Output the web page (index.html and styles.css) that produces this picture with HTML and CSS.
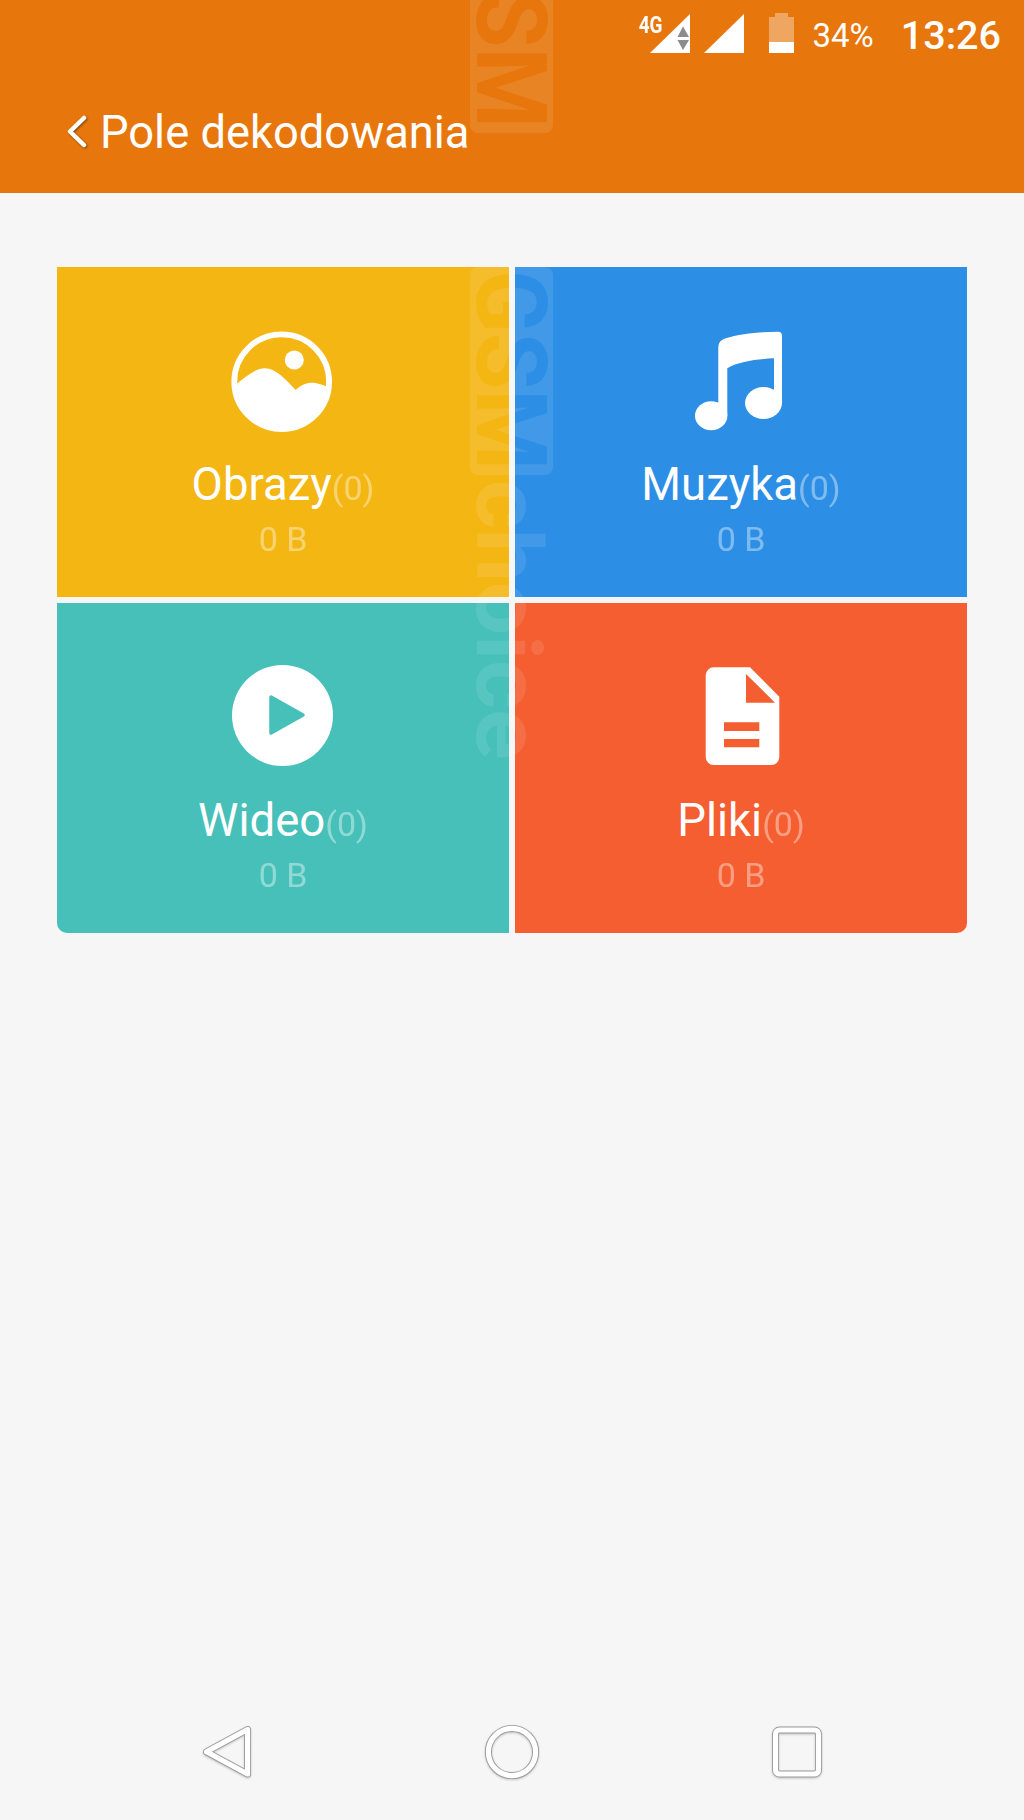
FILE: index.html
```html
<!DOCTYPE html>
<html lang="pl">
<head>
  <meta charset="UTF-8" />
  <meta name="viewport" content="width=device-width, initial-scale=1.0" />
  <title>Pole dekodowania</title>
  <link rel="stylesheet" href="styles.css">
</head>
<body>
  <div class="page">
    <header class="header">
      <div class="status">
        <div class="signal">
          <span class="net">4G</span>
          <svg width="40" height="39" viewBox="0 0 40 39">
            <path d="M0 39 L40 0 V39 Z" fill="#fff"/>
            <path d="M33 12.5 L39 23 H27.5 Z M27.5 26 H39 L33 36 Z" fill="#8c8c8c"/>
          </svg>
        </div>
        <svg class="sim2" width="40" height="39" viewBox="0 0 40 39">
          <path d="M0 39 L40 0 V39 Z" fill="#fff"/>
        </svg>
        <svg class="battery" width="25" height="40" viewBox="0 0 25 40">
          <path d="M6 0 H19 V4 H25 V29 H0 V4 H6 Z" fill="#fff" fill-opacity="0.35"/>
          <rect x="0" y="29" width="25" height="11" fill="#fff"/>
        </svg>
        <span class="percent">34%</span>
        <span class="clock">13:26</span>
      </div>
      <div class="title-row">
        <svg class="chevron" width="24" height="36" viewBox="0 0 24 36">
          <path d="M20 3 L6 16.5 L20 30" fill="none" stroke="#fff" stroke-width="4.5" stroke-linecap="round" stroke-linejoin="round"/>
        </svg>
        <h1 class="title">Pole dekodowania</h1>
      </div>
    </header>

    <main class="main">
      <div class="grid">
        <div class="cell yellow">
          <svg class="icon" width="104" height="104" viewBox="0 0 104 104">
            <circle cx="50.7" cy="51.7" r="47.4" fill="none" stroke="#fff" stroke-width="5.8"/>
            <circle cx="63.3" cy="30" r="9.5" fill="#fff"/>
            <path d="M4 55.5 C15 46 25 38.3 34 38.3 C45 38.3 55 50 64.7 60 C70 55 75 52.7 81 52.7 C86 52.7 90 54.5 97.5 57 A47 47 0 0 1 4 55.5 Z" fill="#fff"/>
          </svg>
          <div class="name">Obrazy<span class="count">(0)</span></div>
          <div class="size">0 B</div>
        </div>
        <div class="cell blue">
          <svg class="icon" width="104" height="104" viewBox="0 0 104 104">
            <path d="M29.3 86 V19 C29.3 13 31 10.5 36 8.5 C52 3 72 2 89 1.7 C91.5 1.6 93 3 93 5.5 V73 H85 V28.3 C70 29 50 31 38.3 38.3 V86 Z" fill="#fff"/>
            <ellipse cx="22.2" cy="85.7" rx="16.2" ry="14.5" fill="#fff"/>
            <ellipse cx="74.5" cy="73" rx="18.5" ry="16" fill="#fff"/>
          </svg>
          <div class="name">Muzyka<span class="count">(0)</span></div>
          <div class="size">0 B</div>
        </div>
        <div class="cell teal">
          <svg class="icon" width="104" height="104" viewBox="0 0 104 104">
            <circle cx="51.5" cy="49.5" r="50.5" fill="#fff"/>
            <path d="M40 31 L72 49 L40 67 Z" fill="#46c0b9" stroke="#46c0b9" stroke-width="3.5" stroke-linejoin="round"/>
          </svg>
          <div class="name">Wideo<span class="count">(0)</span></div>
          <div class="size">0 B</div>
        </div>
        <div class="cell red">
          <svg class="icon" width="104" height="104" viewBox="0 0 104 104">
            <path d="M24.7 1.3 H61 L90.3 30.7 V91 A8 8 0 0 1 82.3 99 H24.7 A8 8 0 0 1 16.7 91 V9.3 A8 8 0 0 1 24.7 1.3 Z" fill="#fff"/>
            <path d="M57 8 V36.7 H86 Z M35 56.3 H70.3 V65 H35 Z M35 73 H70.3 V81.3 H35 Z" fill="#f45e30"/>
          </svg>
          <div class="name">Pliki<span class="count">(0)</span></div>
          <div class="size">0 B</div>
        </div>
      </div>
    </main>

    <nav class="nav">
      <div class="nav-slot">
        <svg width="60" height="60" viewBox="0 0 60 60" fill="none" stroke-linejoin="round">
          <path class="nav-edge" d="M50.5 7.5 V52 L9.5 29.8 Z"/>
          <path class="nav-line" d="M50.5 7.5 V52 L9.5 29.8 Z"/>
        </svg>
      </div>
      <div class="nav-slot">
        <svg width="60" height="60" viewBox="0 0 60 60" fill="none">
          <circle class="nav-edge" cx="30" cy="30" r="23.6"/>
          <circle class="nav-line" cx="30" cy="30" r="23.6"/>
        </svg>
      </div>
      <div class="nav-slot">
        <svg width="60" height="60" viewBox="0 0 60 60" fill="none">
          <rect class="nav-edge" x="8.5" y="8" width="43" height="44" rx="4"/>
          <rect class="nav-line" x="8.5" y="8" width="43" height="44" rx="4"/>
        </svg>
      </div>
    </nav>

    <!-- watermark lying over the screen -->
    <svg class="watermark" width="1024" height="1820" viewBox="0 0 1024 1820">
      <defs>
        <mask id="cutout" maskUnits="userSpaceOnUse" x="0" y="0" width="1024" height="1820">
          <rect width="1024" height="1820" fill="#fff"/>
          <text class="wm-text" fill="#000" transform="translate(477,-72) rotate(90)" textLength="200" lengthAdjust="spacingAndGlyphs">GSM</text>
          <text class="wm-text" fill="#000" transform="translate(477,270) rotate(90)" textLength="200" lengthAdjust="spacingAndGlyphs">GSM</text>
        </mask>
      </defs>
      <g mask="url(#cutout)" fill="#fff" fill-opacity="0.1">
        <rect x="470" y="-80" width="83" height="213" rx="8"/>
        <rect x="470" y="267" width="83" height="208" rx="8"/>
      </g>
      <text class="wm-text wm-tail" fill="#fff" fill-opacity="0.1" transform="translate(477,480) rotate(90)" textLength="280" lengthAdjust="spacingAndGlyphs">choice</text>
    </svg>
  </div>
</body>
</html>
```

FILE: styles.css
```css
* {
  box-sizing: border-box;
}
body {
  margin: 0;
  padding: 0;
  background: #f6f6f6;
  font-family: Roboto, sans-serif;
  color: #fff;
}
.page {
  position: relative;
  display: flex;
  flex-direction: column;
  width: 1024px;
  height: 1820px;
  overflow: hidden;
}
.header {
  height: 193px;
  padding-top: 14px;
  background: #e7770c;
}
.status {
  display: flex;
  align-items: flex-start;
  justify-content: flex-end;
  height: 40px;
  padding-right: 23px;
}
.signal {
  position: relative;
  width: 40px;
  height: 39px;
}
.net {
  position: absolute;
  left: -12px;
  top: 1px;
  font-size: 20px;
  font-weight: 700;
  line-height: 20px;
  transform: scale(0.95, 1.2);
}
.sim2 {
  margin-left: 14px;
}
.battery {
  margin-left: 25px;
  margin-top: -1px;
}
.percent {
  margin-left: 19px;
  font-size: 33px;
  line-height: 44px;
}
.clock {
  margin-left: 27px;
  font-size: 39.5px;
  font-weight: 500;
  line-height: 44px;
}
.title-row {
  display: flex;
  align-items: center;
  margin-top: 53px;
  padding-left: 64px;
}
.chevron {
  filter: drop-shadow(1px 1px 1px rgba(0, 0, 0, 0.45));
}
.title {
  margin: 0 0 0 12px;
  font-size: 45.3px;
  font-weight: 400;
  line-height: 52px;
}
.main {
  flex: 1;
  padding: 74px 57px 0;
}
.grid {
  display: grid;
  grid-template-columns: 452px 452px;
  grid-template-rows: 330px 330px;
  gap: 6px;
}
.cell {
  display: flex;
  flex-direction: column;
  align-items: center;
  padding-top: 63px;
  text-align: center;
}
.yellow {
  background: #f4b613;
}
.blue {
  background: #2c8ee5;
}
.teal {
  background: #46c0b9;
  border-bottom-left-radius: 10px;
}
.red {
  background: #f45e30;
  border-bottom-right-radius: 10px;
}
.icon {
  display: block;
  overflow: visible;
}
.name {
  margin-top: 25px;
  font-size: 45.5px;
  line-height: 52px;
}
.count {
  font-size: 34px;
  opacity: 0.4;
}
.size {
  margin-top: 5px;
  font-size: 34px;
  line-height: 40px;
  opacity: 0.4;
}
.nav {
  display: flex;
  justify-content: center;
  align-items: center;
  height: 137px;
}
.nav-slot {
  display: flex;
  justify-content: center;
  width: 285px;
}
.nav-slot svg {
  filter: drop-shadow(0 1px 1px rgba(0, 0, 0, 0.2));
}
.nav-edge {
  stroke: #999;
  stroke-width: 7;
}
.nav-line {
  stroke: #fff;
  stroke-width: 5.2;
}
.watermark {
  position: absolute;
  left: 0;
  top: 0;
  pointer-events: none;
}
.wm-text {
  font-family: Roboto, sans-serif;
  font-size: 98px;
  font-weight: 700;
}
.wm-tail {
  font-size: 90px;
}
```
